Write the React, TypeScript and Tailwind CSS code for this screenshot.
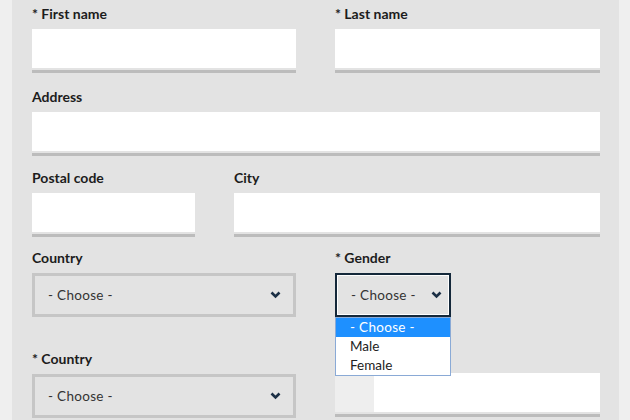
import React from "react";

const font = { fontFamily: "Lato, 'Liberation Sans', sans-serif" };

function Label({ children }: { children: React.ReactNode }) {
  return <div className="h-[18px] text-[14px] font-bold leading-[18px] text-[#1c1c1c]">{children}</div>;
}

function TextInput({ prefix }: { prefix?: boolean }) {
  return (
    <div className="mt-[6px]">
      <div className="flex h-[39px] bg-white">
        {prefix && <div className="w-[39px] bg-[#eeeeee]" />}
      </div>
      <div className="mt-[2px] h-[3px] bg-[#bcbcbc]" />
    </div>
  );
}

function Chevron() {
  return (
    <svg width="11" height="8" viewBox="0 0 11 8" className="shrink-0">
      <polyline points="1.5,1.5 5.5,5.5 9.5,1.5" fill="none" stroke="#1b2f45" strokeWidth="2.6" />
    </svg>
  );
}

function Select({ focused }: { focused?: boolean }) {
  return (
    <div
      className={
        "flex h-[44px] items-center justify-between bg-[#e3e3e3] text-[13.5px] text-[#333] " +
        (focused
          ? "border-2 border-[#14283a] pl-[14px] pr-[7px] shadow-[inset_0_0_0_1px_#fff]"
          : "border-[3px] border-[#c6c6c6] pl-[13px] pr-[12px]")
      }
    >
      <span className="tracking-[0.3px]">- Choose -</span>
      <Chevron />
    </div>
  );
}

export default function App() {
  return (
    <div className="h-[420px] w-[630px] overflow-hidden bg-[#efefef]" style={font}>
      <div className="ml-[12px] h-full w-[607px] bg-[#e3e3e3] pl-[20px] pr-[19px] pt-[5px]">
        <div className="grid grid-cols-[264px_265px] gap-x-[39px]">
          <div>
            <Label>* First name</Label>
            <TextInput />
          </div>
          <div>
            <Label>* Last name</Label>
            <TextInput />
          </div>
        </div>

        <div className="mt-[15px]">
          <Label>Address</Label>
          <TextInput />
        </div>

        <div className="mt-[13px] grid grid-cols-[163px_366px] gap-x-[39px]">
          <div>
            <Label>Postal code</Label>
            <TextInput />
          </div>
          <div>
            <Label>City</Label>
            <TextInput />
          </div>
        </div>

        <div className="mt-[12px] grid grid-cols-[264px_265px] gap-x-[39px]">
          <div>
            <Label>Country</Label>
            <div className="mt-[6px]">
              <Select />
            </div>
            <div className="mt-[33px]">
              <Label>* Country</Label>
              <div className="mt-[6px]">
                <Select />
              </div>
            </div>
          </div>
          <div>
            <Label>* Gender</Label>
            <div className="relative mt-[6px] w-[116px]">
              <Select focused />
              <div className="absolute left-0 top-[44px] z-10 w-[116px] border border-[#8aaad6] bg-white text-[13.5px] leading-[19px] text-[#222]">
                <div className="bg-[#1e90ff] pl-[14px] tracking-[0.3px] text-white">- Choose -</div>
                <div className="pl-[14px]">Male</div>
                <div className="pl-[14px]">Female</div>
              </div>
            </div>
            <div className="mt-[56px]">
              <TextInput prefix />
            </div>
          </div>
        </div>
      </div>
    </div>
  );
}
